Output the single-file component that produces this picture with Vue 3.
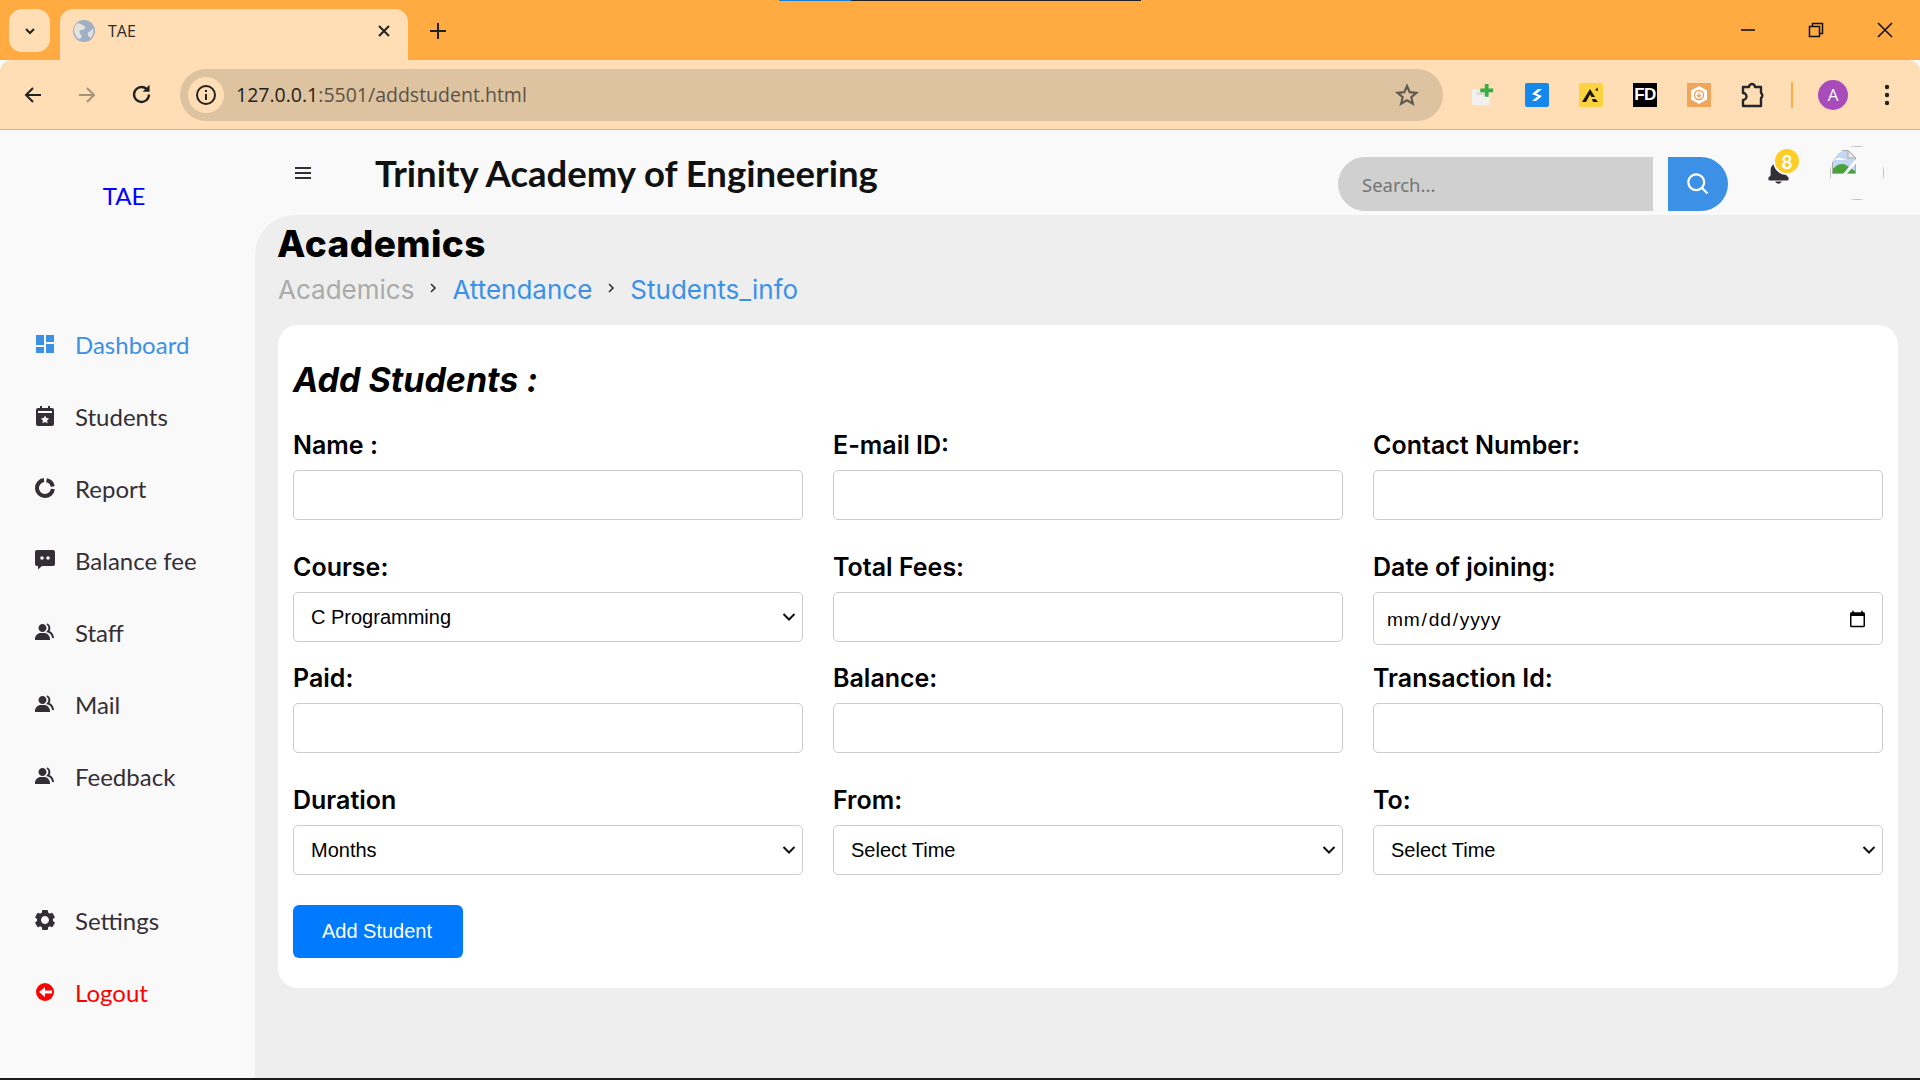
<template>
  <div class="screen">
    <!-- browser chrome -->
    <div class="progress-line"><span></span></div>
    <div class="tabstrip">
      <button class="tab-list"><svg width="14" height="14" viewBox="0 0 14 14"><path d="M3 5l4 4 4-4" fill="none" stroke="#222" stroke-width="2"/></svg></button>
      <div class="tab">
        <svg class="favicon" width="22" height="22" viewBox="0 0 22 22">
          <circle cx="11" cy="11" r="11" fill="#9fb0c6"/>
          <path d="M5 3c3 1 6 2 7 4s-2 3-4 3-2 3 0 5-1 4-2 4C3 17 1 13 1 10s2-6 4-7zM20 8c1 4 0 8-3 10-1-2-3-3-2-5s3-1 5-5z" fill="#e6e2dc"/>
        </svg>
        <span class="tab-title">TAE</span>
        <svg class="tab-close" width="14" height="14" viewBox="0 0 14 14"><path d="M2 2l10 10M12 2L2 12" stroke="#222" stroke-width="2"/></svg>
      </div>
      <svg class="new-tab" width="18" height="18" viewBox="0 0 18 18"><path d="M9 1v16M1 9h16" stroke="#222" stroke-width="2"/></svg>
      <div class="win-controls">
        <svg width="16" height="16" viewBox="0 0 16 16"><path d="M1 8h14" stroke="#111" stroke-width="1.6"/></svg>
        <svg width="16" height="16" viewBox="0 0 16 16"><path d="M1.500 4.500h10v10h-10zM4.500 4V1.500h10v10H12" fill="none" stroke="#111" stroke-width="1.500"/></svg>
        <svg width="18" height="18" viewBox="0 0 18 18"><path d="M2 2l14 14M16 2L2 16" stroke="#111" stroke-width="1.6"/></svg>
      </div>
    </div>
    <div class="toolbar">
      <div class="nav-btns">
        <svg width="20" height="20" viewBox="0 0 20 20"><path d="M18 10H3M10 3l-7 7 7 7" fill="none" stroke="#222" stroke-width="2"/></svg>
        <svg width="20" height="20" viewBox="0 0 20 20"><path d="M2 10h15M10 3l7 7-7 7" fill="none" stroke="#a6937c" stroke-width="2"/></svg>
        <svg width="23" height="23" viewBox="0 0 20 20"><path d="M16.500 10a6.500 6.500 0 1 1-2-4.700" fill="none" stroke="#222" stroke-width="2"/><path d="M17 1.500V7.500H11z" fill="#222"/></svg>
      </div>
      <div class="omnibox">
        <span class="info-chip">
          <svg width="22" height="22" viewBox="0 0 22 22"><circle cx="11" cy="11" r="9" fill="none" stroke="#222" stroke-width="2"/><path d="M11 10v6M11 6v2" stroke="#222" stroke-width="2"/></svg>
        </span>
        <span class="url">127.0.0.1<span class="url-rest">:5501/addstudent.html</span></span>
        <svg class="star" width="24" height="24" viewBox="0 0 24 24"><path d="M12 3l2.700 6.200 6.700.6-5.100 4.400 1.600 6.600L12 17.300l-5.900 3.500 1.600-6.600-5.100-4.400 6.700-.6z" fill="none" stroke="#5f5a52" stroke-width="2.200"/></svg>
      </div>
      <div class="extensions">
        <span class="ext">
          <svg width="26" height="26" viewBox="0 0 26 26"><path d="M1 7h7l2 2h10v15H3a2 2 0 0 1-2-2z" fill="#f3f1ee"/><path d="M6 10h14v3H6z" fill="#dedad5"/><path d="M15 1h4v5h5v4h-5v5h-4v-5h-5V6h5z" fill="#35b044"/></svg>
        </span>
        <span class="ext">
          <svg width="24" height="24" viewBox="0 0 24 24"><rect width="24" height="24" rx="2" fill="#1487ec"/><path d="M7 11l6-5h4l-6 5zM17 13l-6 5H7l6-5z" fill="#fff"/><path d="M7 11h5l5 2h-5z" fill="#fff"/></svg>
        </span>
        <span class="ext">
          <svg width="24" height="24" viewBox="0 0 24 24"><rect width="24" height="24" rx="2" fill="#fdd33f"/><path d="M3 19L11 6l5 8h-3.500l-1.500-2.500L7 19zM14 19l-1-3h3.500l2.500 3zM16 7l2.500-2.500.6 3.500z" fill="#1a1505"/></svg>
        </span>
        <span class="ext fd">FD</span>
        <span class="ext">
          <svg width="24" height="24" viewBox="0 0 24 24"><rect width="24" height="24" fill="#f0a45c"/><path d="M12 3l8 4.500v9L12 21l-8-4.500v-9z" fill="#fff"/><circle cx="12" cy="12" r="4.500" fill="none" stroke="#ee9c4e" stroke-width="1.300"/><path d="M12 9.500v4M10 12l2 2 2-2" fill="none" stroke="#ee9c4e" stroke-width="1.100"/></svg>
        </span>
        <span class="ext">
          <svg width="24" height="26" viewBox="0 0 24 26"><path d="M2 5h6a3 3 0 0 1 6 0h6v6a3 3 0 0 1 0 5v8H2v-6a3.500 3.500 0 0 0 0-7z" fill="none" stroke="#25272b" stroke-width="2.400" stroke-linejoin="round"/></svg>
        </span>
      </div>
      <span class="tool-divider"></span>
      <span class="profile">A</span>
      <svg class="kebab" width="6" height="22" viewBox="0 0 6 22"><circle cx="3" cy="3" r="2.200" fill="#222"/><circle cx="3" cy="11" r="2.200" fill="#222"/><circle cx="3" cy="19" r="2.200" fill="#222"/></svg>
    </div>

    <!-- page -->
    <div class="page">
      <aside class="sidebar">
        <div class="brand">TAE</div>
        <ul class="menu">
          <li v-for="item in menu" :key="item.label" :class="item.cls">
            <svg class="menu-icon" width="24" height="24" viewBox="0 0 24 24" v-html="item.icon"></svg>
            <span>{{ item.label }}</span>
          </li>
        </ul>
        <ul class="menu bottom">
          <li v-for="item in bottomMenu" :key="item.label" :class="item.cls">
            <svg class="menu-icon" width="24" height="24" viewBox="0 0 24 24" v-html="item.icon"></svg>
            <span>{{ item.label }}</span>
          </li>
        </ul>
      </aside>

      <div class="content">
        <nav class="topbar">
          <svg class="hamburger" width="24" height="24" viewBox="0 0 24 24"><path d="M4 6h16v2H4zm0 5h16v2H4zm0 5h16v2H4z" fill="#342e37"/></svg>
          <h1 class="college">Trinity Academy of Engineering</h1>
          <form class="search" @submit.prevent>
            <input type="search" placeholder="Search...">
            <button type="button"><svg width="27" height="27" viewBox="0 0 24 24"><path :d="searchPath" fill="#fff"/></svg></button>
          </form>
          <div class="bell">
            <svg width="27" height="27" viewBox="0 0 24 24"><path :d="bellPath" fill="#342e37"/></svg>
            <span class="badge">8</span>
          </div>
          <div class="avatar">
            <div class="avatar-inner">
              <svg width="24" height="24" viewBox="0 0 24 24">
                <path d="M.5.5H16L23.500 8v15.500H.5z" fill="#c4d7f0" stroke="#a9a9a9"/>
                <path d="M16 .5V8h7.500z" fill="#ececec" stroke="#a9a9a9"/>
                <path d="M3 10c2-2 5-3 7-1.500 2 .5 3 .5 4 1.500z" fill="#fff"/>
                <path d="M1 23v-4c4-5 9-6 13-4l9 6v2z" fill="#4aa03a"/>
                <path d="M25 10L12 25" stroke="#f9f9f9" stroke-width="3"/>
              </svg>
            </div>
          </div>
        </nav>

        <main class="main">
          <h2 class="page-title">Academics</h2>
          <div class="crumbs">
            <span class="crumb-muted">Academics</span>
            <svg width="12" height="12" viewBox="0 0 12 12"><path d="M4 2l4 4-4 4" fill="none" stroke="#342e37" stroke-width="1.600"/></svg>
            <span class="crumb-link">Attendance</span>
            <svg width="12" height="12" viewBox="0 0 12 12"><path d="M4 2l4 4-4 4" fill="none" stroke="#342e37" stroke-width="1.600"/></svg>
            <span class="crumb-link">Students_info</span>
          </div>

          <section class="card">
            <h3 class="card-title">Add Students :</h3>
            <form @submit.prevent>
              <div v-for="(row, i) in rows" :key="i" class="form-row" :class="{ tight: i === 1 }">
                <div v-for="field in row" :key="field.label" class="field">
                  <label>{{ field.label }}</label>
                  <div v-if="field.options" class="select-wrap">
                    <select>
                      <option v-for="o in field.options" :key="o">{{ o }}</option>
                    </select>
                    <svg width="14" height="14" viewBox="0 0 14 14"><path d="M1.500 4l5.500 5.500L12.500 4" fill="none" stroke="#111" stroke-width="2"/></svg>
                  </div>
                  <input v-else-if="field.type === 'date'" type="date" class="date">
                  <input v-else type="text">
                </div>
              </div>
              <button type="button" class="submit">Add Student</button>
            </form>
          </section>
        </main>
      </div>
    </div>
    <div class="bottom-edge"></div>
  </div>
</template>

<script setup>
const groupIcon = '<path fill="currentColor" d="M16.604 11.048a5.67 5.67 0 0 0 .751-3.44c-.179-1.784-1.175-3.361-2.803-4.44l-1.105 1.666c1.119.742 1.8 1.799 1.918 2.974a3.693 3.693 0 0 1-1.072 2.986l-1.192 1.192 1.618.475C18.951 13.701 19 17.957 19 18h2c0-1.789-.956-5.285-4.396-6.952z"/><path fill="currentColor" d="M9.5 12c2.206 0 4-1.794 4-4s-1.794-4-4-4-4 1.794-4 4 1.794 4 4 4zm1.5 1H8c-3.309 0-6 2.691-6 6v1h15v-1c0-3.309-2.691-6-6-6z"/>'

const menu = [
  {
    label: 'Dashboard',
    cls: 'active',
    icon: '<path fill="currentColor" d="M3 3h8v10H3zM3 15h8v6H3zM13 12h8v9h-8zM13 3h8v7h-8z"/>'
  },
  {
    label: 'Students',
    icon: '<path fill="currentColor" d="M5 4h2V2h2v2h6V2h2v2h2a2 2 0 0 1 2 2v14a2 2 0 0 1-2 2H5a2 2 0 0 1-2-2V6a2 2 0 0 1 2-2z"/><path fill="#f9f9f9" d="M5 7h14v2H5zM12 11.5l1.3 2.6 2.8.4-2 2 .5 2.8-2.6-1.3-2.6 1.3.5-2.8-2-2 2.8-.4z"/>'
  },
  {
    label: 'Report',
    icon: '<path fill="none" stroke="currentColor" stroke-width="4" d="M11 4.100A8 8 0 1 0 19.900 13"/><path fill="none" stroke="currentColor" stroke-width="4" d="M13.500 4.200A8 8 0 0 1 19.800 10.500"/>'
  },
  {
    label: 'Balance fee',
    icon: '<path fill="currentColor" d="M4 2h16a2 2 0 0 1 2 2v12a2 2 0 0 1-2 2H9l-4 3.500V18H4a2 2 0 0 1-2-2V4a2 2 0 0 1 2-2z"/><circle cx="9" cy="10" r="1.800" fill="#f9f9f9"/><circle cx="15" cy="10" r="1.800" fill="#f9f9f9"/>'
  },
  { label: 'Staff', icon: groupIcon },
  { label: 'Mail', icon: groupIcon },
  { label: 'Feedback', icon: groupIcon }
]

const bottomMenu = [
  {
    label: 'Settings',
    icon: '<path fill="currentColor" d="m2.344 15.271 2 3.46a1 1 0 0 0 1.366.365l1.396-.806c.58.457 1.221.832 1.895 1.112V21a1 1 0 0 0 1 1h4a1 1 0 0 0 1-1v-1.598a8.094 8.094 0 0 0 1.895-1.112l1.396.806c.477.275 1.091.11 1.366-.365l2-3.46a1.004 1.004 0 0 0-.365-1.366l-1.372-.793a7.683 7.683 0 0 0-.002-2.224l1.372-.793c.476-.275.641-.89.365-1.366l-2-3.46a1 1 0 0 0-1.366-.365l-1.396.806A8.034 8.034 0 0 0 15 4.598V3a1 1 0 0 0-1-1h-4a1 1 0 0 0-1 1v1.598A8.094 8.094 0 0 0 7.105 5.71L5.71 4.904a.999.999 0 0 0-1.366.365l-2 3.46a1.004 1.004 0 0 0 .365 1.366l1.372.793a7.683 7.683 0 0 0 0 2.224l-1.372.793c-.476.275-.641.89-.365 1.366zM12 8c2.206 0 4 1.794 4 4s-1.794 4-4 4-4-1.794-4-4 1.794-4 4-4z"/>'
  },
  {
    label: 'Logout',
    cls: 'logout',
    icon: '<circle cx="12" cy="12" r="9" fill="currentColor"/><path fill="#f9f9f9" d="M19 10.500h-7V7l-6 5 6 5v-3.500h7z"/>'
  }
]

const searchPath = 'M10 18a7.952 7.952 0 0 0 4.897-1.688l4.396 4.396 1.414-1.414-4.396-4.396A7.952 7.952 0 0 0 18 10c0-4.411-3.589-8-8-8s-8 3.589-8 8 3.589 8 8 8zm0-14c3.309 0 6 2.691 6 6s-2.691 6-6 6-6-2.691-6-6 2.691-6 6-6z'
const bellPath = 'M12 22c1.311 0 2.407-.834 2.818-2H9.182C9.593 21.166 10.689 22 12 22zm7-7.414V10c0-3.217-2.185-5.927-5.145-6.742C13.562 2.52 12.846 2 12 2s-1.562.52-1.855 1.258C7.185 4.074 5 6.783 5 10v4.586l-1.707 1.707A.996.996 0 0 0 3 17v1a1 1 0 0 0 1 1h16a1 1 0 0 0 1-1v-1a.996.996 0 0 0-.293-.707L19 14.586z'

const rows = [
  [{ label: 'Name :' }, { label: 'E-mail ID:' }, { label: 'Contact Number:' }],
  [
    { label: 'Course:', options: ['C Programming', 'C++', 'Java', 'Python'] },
    { label: 'Total Fees:' },
    { label: 'Date of joining:', type: 'date' }
  ],
  [{ label: 'Paid:' }, { label: 'Balance:' }, { label: 'Transaction Id:' }],
  [
    { label: 'Duration', options: ['Months', 'Weeks'] },
    { label: 'From:', options: ['Select Time', '9:00 AM'] },
    { label: 'To:', options: ['Select Time', '5:00 PM'] }
  ]
]
</script>

<style scoped>
.screen {
  width: 1920px;
  height: 1080px;
  position: relative;
  overflow: hidden;
  display: flex;
  flex-direction: column;
  font-family: "Lato", sans-serif;
  background: #f9f9f9;
}

.progress-line {
  position: absolute;
  top: 0;
  left: 779px;
  width: 362px;
  height: 1px;
  background: #222;
}

.progress-line span {
  display: block;
  width: 72px;
  height: 1px;
  background: #1a80d6;
}

.tabstrip {
  height: 60px;
  flex: none;
  background: #ffab42;
  display: flex;
  align-items: flex-end;
  padding-left: 9px;
}

.tab-list {
  width: 41px;
  height: 43px;
  margin-bottom: 8px;
  border: none;
  border-radius: 13px;
  background: #ffddb5;
  display: flex;
  align-items: center;
  justify-content: center;
  padding: 0;
}

.tab {
  width: 348px;
  height: 51px;
  margin-left: 10px;
  background: #ffddb5;
  border-radius: 13px 13px 0 0;
  display: flex;
  align-items: center;
  padding: 0 17px 7px 13px;
  box-sizing: border-box;
}

.tab-title {
  font-family: "Open Sans", sans-serif;
  font-size: 16px;
  color: #2a2a2a;
  margin-left: 13px;
  flex: 1;
}

.new-tab {
  margin: 0 0 20px 21px;
}

.win-controls {
  margin-left: auto;
  height: 60px;
  display: flex;
  align-items: center;
  gap: 52px;
  padding: 0 26px 0 0;
}

.toolbar {
  height: 69px;
  flex: none;
  box-sizing: content-box;
  background: #ffddb5;
  border-bottom: 1px solid #cdb799;
  border-radius: 12px 12px 0 0;
  display: flex;
  align-items: center;
}

.nav-btns {
  width: 180px;
  padding: 0 27px 0 23px;
  box-sizing: border-box;
  display: flex;
  justify-content: space-between;
  align-items: center;
  flex: none;
}

.omnibox {
  width: 1263px;
  height: 52px;
  flex: none;
  background: #dec3a0;
  border-radius: 26px;
  display: flex;
  align-items: center;
  padding: 0 24px 0 8px;
  box-sizing: border-box;
}

.info-chip {
  width: 36px;
  height: 36px;
  border-radius: 50%;
  background: #ffddb5;
  display: flex;
  align-items: center;
  justify-content: center;
}

.url {
  margin-left: 12px;
  flex: 1;
  font-family: "Open Sans", sans-serif;
  font-size: 19.5px;
  color: #26221d;
}

.url-rest {
  color: #5b5247;
}

.extensions {
  margin-left: 28px;
  display: flex;
  align-items: center;
  gap: 30px;
}

.ext {
  width: 24px;
  height: 24px;
  display: flex;
  align-items: center;
  justify-content: center;
}

.fd {
  background: #000;
  color: #fff;
  font-family: "Liberation Sans", sans-serif;
  font-weight: 700;
  font-size: 17px;
  letter-spacing: -0.5px;
}

.tool-divider {
  width: 2px;
  height: 26px;
  background: #ffab42;
  margin-left: 26px;
}

.profile {
  width: 30px;
  height: 30px;
  margin-left: 25px;
  border-radius: 50%;
  background: #a94cbb;
  color: #fff;
  font-family: "Open Sans", sans-serif;
  font-size: 17px;
  display: flex;
  align-items: center;
  justify-content: center;
}

.kebab {
  margin-left: 36px;
}

.page {
  flex: 1;
  min-height: 0;
  display: flex;
}

.sidebar {
  width: 255px;
  flex: none;
  background: #f9f9f9;
  display: flex;
  flex-direction: column;
}

.brand {
  margin-top: 48px;
  height: 36px;
  line-height: 36px;
  text-align: center;
  font-size: 24px;
  color: #0000ff;
  padding-right: 7px;
}

.menu {
  list-style: none;
  margin: 94px 0 0;
  padding: 0 0 0 33px;
}

.menu.bottom {
  margin-top: 72px;
}

.menu li {
  height: 72px;
  display: flex;
  align-items: center;
  gap: 18px;
  font-size: 24px;
  color: #342e37;
}

.menu li.active {
  color: #3c91e6;
}

.menu li.logout {
  color: #ff0000;
}

.content {
  flex: 1;
  min-width: 0;
  display: flex;
  flex-direction: column;
}

.topbar {
  height: 85px;
  flex: none;
  display: flex;
  align-items: center;
  padding-left: 36px;
}

.college {
  margin: 0 0 0 60px;
  font-size: 36.5px;
  font-weight: 700;
  color: #111;
  white-space: nowrap;
}

.search {
  margin-left: auto;
  display: flex;
  height: 54px;
  margin-top: 23px;
}

.search input {
  width: 315px;
  height: 54px;
  box-sizing: border-box;
  border: none;
  outline: none;
  background: #d0d0d0;
  border-radius: 36px 0 0 36px;
  padding: 0 24px;
  font-family: "Noto Sans", sans-serif;
  font-size: 18.5px;
  appearance: none;
}

.search input::placeholder {
  color: #757575;
}

.search button {
  width: 60px;
  height: 54px;
  margin-left: 15px;
  border: none;
  padding: 0;
  background: #3c91e6;
  border-radius: 0 36px 36px 0;
  display: flex;
  align-items: center;
  justify-content: center;
}

.bell {
  position: relative;
  width: 27px;
  height: 27px;
  margin-left: 37px;
}

.badge {
  position: absolute;
  top: -12px;
  left: 8px;
  width: 24px;
  height: 24px;
  box-sizing: content-box;
  border-radius: 50%;
  background: #ffce26;
  border: 2px solid #f9f9f9;
  color: #fff;
  font-size: 19px;
  font-weight: 700;
  display: flex;
  align-items: center;
  justify-content: center;
}

.avatar {
  width: 54px;
  height: 54px;
  margin: 0 36px 0 38px;
  border-radius: 50%;
  overflow: hidden;
}

.avatar-inner {
  width: 100%;
  height: 100%;
  box-sizing: border-box;
  border: 1px solid #bbb;
  padding: 3px 1px 1px;
}

.main {
  flex: 1;
  background: #eee;
  border-radius: 40px 0 0 0;
  padding: 6px 22px 0 23px;
  min-height: 0;
}

.page-title {
  margin: 0 0 0 -1px;
  font-family: "Inter", sans-serif;
  font-size: 37px;
  line-height: 46px;
  letter-spacing: 0.4px;
  font-weight: 800;
  color: #000;
}

.crumbs {
  height: 44px;
  display: flex;
  align-items: center;
  gap: 13px;
  font-family: "Inter", sans-serif;
  font-size: 26px;
}

.crumbs svg {
  margin-bottom: 3px;
}

.crumb-muted {
  color: #aaa;
}

.crumb-link {
  color: #3c91e6;
}

.card {
  margin-top: 14px;
  background: #fff;
  border-radius: 20px;
  padding: 33px 15px 30px;
}

.card-title {
  margin: 0 0 26px;
  font-family: "Inter", sans-serif;
  font-style: italic;
  font-weight: 700;
  font-size: 34px;
  line-height: 44px;
  color: #000;
}

.form-row {
  display: grid;
  grid-template-columns: repeat(3, 1fr);
  gap: 30px;
  margin-bottom: 30px;
}

.form-row.tight {
  margin-bottom: 16px;
}

.field label {
  display: block;
  height: 42px;
  line-height: 35px;
  font-family: "Inter", sans-serif;
  font-size: 25px;
  font-weight: 600;
  color: #000;
}

.field input,
.field select {
  display: block;
  width: 100%;
  height: 50px;
  box-sizing: border-box;
  border: 1px solid #ccc;
  border-radius: 5px;
  background: #fff;
  font-family: "Liberation Sans", sans-serif;
  font-size: 20px;
  color: #000;
  outline: none;
}

.select-wrap {
  position: relative;
}

.select-wrap svg {
  position: absolute;
  right: 7px;
  top: 18px;
  pointer-events: none;
}

.field select {
  appearance: none;
  padding-left: 17px;
}

.field input.date {
  height: 53px;
  padding: 3px 13px 0 12px;
  font-size: 19.2px;
  letter-spacing: 0.8px;
}

.submit {
  display: block;
  width: 170px;
  height: 53px;
  border: none;
  border-radius: 6px;
  background: #007bff;
  color: #fff;
  font-family: "Liberation Sans", sans-serif;
  font-size: 20px;
  padding: 0 2px 0 0;
}

.bottom-edge {
  position: absolute;
  left: 0;
  right: 0;
  bottom: 0;
  height: 2px;
  background: #1c1c1c;
}
</style>

<style>
body {
  margin: 0;
}
</style>
